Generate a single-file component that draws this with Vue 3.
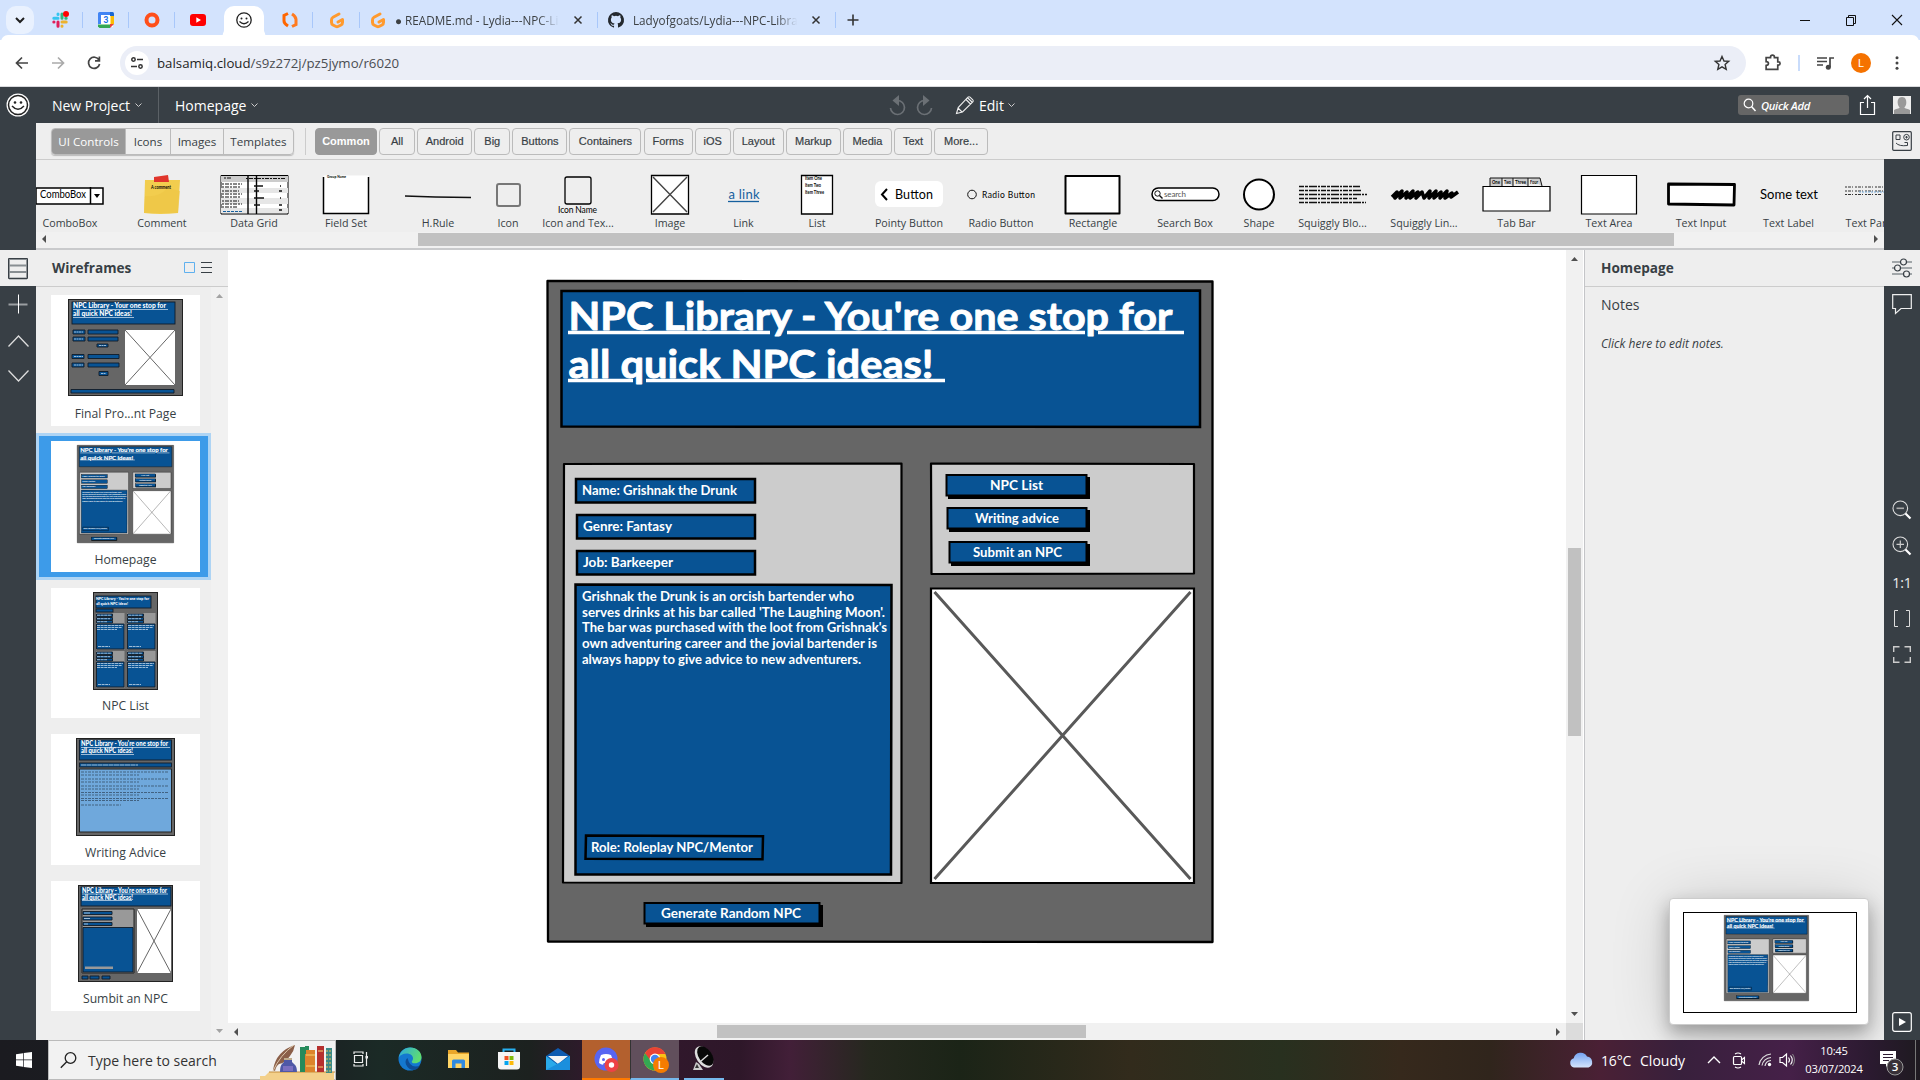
<script setup>
import { h } from 'vue'

const glyphs = {
  chevDown: '<path d="M4 6l4 4 4-4" fill="none" stroke="#1f1f1f" stroke-width="2"/>',
  slack: '<g stroke-width="3" stroke-linecap="round" fill="none"><path d="M6 6.2H1.8M6 2v.4" stroke="#36c5f0"/><path d="M10 2v4.2M13.8 6.2h.4" stroke="#2eb67d"/><path d="M10 10h4.2M10 14v.2" stroke="#ecb22e"/><path d="M6 14.2V10M2 10h-.2" stroke="#e01e5a"/></g><circle cx="14" cy="2" r="3" fill="#f00"/>',
  calendar: '<path d="M1 1h14v14H1z" fill="#fff"/><path d="M0 1.500Q0 0 1.500 0H12v3H3v9H0z" fill="#4285f4"/><path d="M12 0h2.500Q16 0 16 1.500V4h-4z" fill="#1967d2"/><path d="M12.500 4H16v8h-3.500z" fill="#fbbc04"/><path d="M3 12.500h9V16H1.500L0 14.500v-2z" fill="#34a853"/><path d="M12 16v-4h4z" fill="#ea4335"/><text x="8" y="11" font-size="8.500" font-weight="700" font-family="Roboto, sans-serif" fill="#1a73e8" text-anchor="middle">3</text>',
  ring: '<ellipse cx="8" cy="8" rx="5.500" ry="5.500" fill="none" stroke="#ff4f1a" stroke-width="4"/>',
  youtube: '<rect x="0" y="2" width="16" height="12" rx="3" fill="#f00"/><path d="M6.300 5.300v5.400L11 8z" fill="#fff"/>',
  smiley: '<circle cx="8" cy="8" r="7.200" fill="#fff" stroke="#222" stroke-width="1.300"/><circle cx="5.500" cy="6.500" r="1" fill="#222"/><circle cx="10.500" cy="6.500" r="1" fill="#222"/><path d="M3.500 9.500q4.500 4.500 9 0" fill="none" stroke="#222" stroke-width="1.200"/>',
  bolt: '<path d="M6 1.500L2 3.500V9q0 2.500 4 5" fill="none" stroke="#f60" stroke-width="3"/><path d="M10 14.500l4-2V7.500q0-3-4-5.500" fill="none" stroke="#ff7a1f" stroke-width="3"/>',
  gitpod: '<path d="M10 2L4 5.200Q2.500 6 2.500 8v2.500Q2.500 12 4 13l3 1.500q1 .5 2 0l3-1.500q1.500-1 1.500-2.500V7.500L9 10" fill="none" stroke="#ff9a2e" stroke-width="3" stroke-linecap="round" stroke-linejoin="round"/>',
  github: '<path fill="#24292f" d="M8 0a8 8 0 0 0-2.530 15.590c.4.070.55-.17.55-.38v-1.490c-2.230.48-2.700-.94-2.700-.94-.36-.92-.89-1.170-.89-1.170-.73-.5.05-.48.05-.48.8.05 1.230.82 1.230.82.71 1.220 1.870.87 2.330.66.070-.51.28-.87.5-1.070-1.780-.2-3.640-.88-3.640-3.950 0-.87.31-1.590.82-2.150-.08-.2-.36-1.020.08-2.120 0 0 .67-.21 2.200.82a7.600 7.600 0 0 1 4 0c1.530-1.040 2.200-.82 2.200-.82.44 1.100.16 1.920.08 2.120.51.56.82 1.270.82 2.150 0 3.070-1.870 3.750-3.650 3.950.29.25.54.73.54 1.480v2.190c0 .21.15.46.55.38A8 8 0 0 0 8 0z"/>',
  close: '<path d="M4.500 4.500l7 7m0-7l-7 7" stroke="#333" stroke-width="1.500"/>',
  plus: '<path d="M8 2.500v11M2.500 8h11" stroke="#333" stroke-width="1.600"/>',
  min: '<path d="M3 8.500h10" stroke="#111" stroke-width="1"/>',
  restore: '<path d="M3.500 5.500h7v8h-7zM5.500 5V3.500h7v8H11" fill="none" stroke="#111"/>',
  winClose: '<path d="M3 3l10 10M13 3L3 13" stroke="#111" stroke-width="1.100"/>',
  back: '<path d="M14 8H3m5-5.500L2.500 8 8 13.500" fill="none" stroke="#444" stroke-width="1.700"/>',
  fwd: '<path d="M2 8h11M8 2.500L13.500 8 8 13.500" fill="none" stroke="#aaa" stroke-width="1.700"/>',
  reload: '<path d="M13 5a5.600 5.600 0 1 0 .6 4M13.400 1.500v4.300H9" fill="none" stroke="#444" stroke-width="1.700"/>',
  tune: '<path d="M8 4.500h6M2 11.500h6" stroke="#333" stroke-width="1.600"/><circle cx="4.500" cy="4.500" r="1.700" fill="none" stroke="#333" stroke-width="1.500"/><circle cx="11.500" cy="11.500" r="1.700" fill="none" stroke="#333" stroke-width="1.500"/>',
  star: '<path d="M8 1.500l2 4.500 4.700.4-3.600 3.100 1.100 4.800L8 11.800l-4.200 2.500 1.100-4.800L1.300 6.400 6 6z" fill="none" stroke="#333" stroke-width="1.400"/>',
  puzzle: '<path d="M2 3.500h4.200V2.800a1.800 1.800 0 0 1 3.600 0v.7H13v4h.7a1.500 1.500 0 0 1 0 3H13v4H2v-3.700q2.200-.3 2.200-1.900T2 7.200z" fill="none" stroke="#444" stroke-width="1.600"/>',
  music: '<path d="M0 3h10M0 6.500h10M0 10h6M13 12V3h4" fill="none" stroke="#444" stroke-width="1.700"/><circle cx="11.300" cy="12.300" r="2.500" fill="#444"/>',
  dots: '<circle cx="8" cy="2.800" r="1.500" fill="#444"/><circle cx="8" cy="8" r="1.500" fill="#444"/><circle cx="8" cy="13.200" r="1.500" fill="#444"/>',
  logo: '<circle cx="12" cy="12" r="11.500" fill="#fff"/><circle cx="12" cy="12" r="9.500" fill="none" stroke="#222" stroke-width="1.500"/><circle cx="9" cy="9.500" r="1.300" fill="#222"/><circle cx="15" cy="9.500" r="1.300" fill="#222"/><path d="M6 13q6 6.500 12 0" fill="none" stroke="#222" stroke-width="1.500"/>',
  caret: '<path d="M1.500 2.500L4.500 5.500l3-3" fill="none" stroke="#ccc" stroke-width="1"/>',
  undo: '<path d="M8.500 5.500a7 7 0 1 1-7 7.500" fill="none" stroke="#6b7075" stroke-width="1.700"/><path d="M10 0v11L3.500 5.500z" fill="#6b7075"/>',
  redo: '<path d="M9.500 5.500a7 7 0 1 0 7 7.500" fill="none" stroke="#6b7075" stroke-width="1.700"/><path d="M8 0v11l6.500-5.500z" fill="#6b7075"/>',
  pencil: '<path d="M1.500 18.500l1.700-6L13 2.200q1-1 2 0l2.800 2.700q1 1 0 2L7.500 17zM11 4.500L15.500 9M12.800 3L17 7M3 13l4 4" fill="none" stroke="#eee" stroke-width="1.100"/>',
  search: '<circle cx="5.500" cy="5.500" r="4.300" fill="none" stroke="#fff" stroke-width="1.200"/><path d="M8.500 8.500L12.500 13" stroke="#fff" stroke-width="1.500"/>',
  share: '<path d="M5 8.500H1.500v12h14v-12H12M8.500 14V1.500M5 5l3.500-3.500L12 5" fill="none" stroke="#fff" stroke-width="1.200"/>',
  avatar: '<path d="M0 0h18v18H0z" fill="#ededed"/><path d="M9 1C5.500 1 4.500 4 4.700 7c.2 2 1 3.500 2 4.500-.5 1-4 1.500-5.700 2.500V18h16v-4c-1.700-1-5.200-1.500-5.700-2.500 1-1 1.800-2.500 2-4.500C13.500 4 12.500 1 9 1z" fill="#999"/>',
  inspector: '<rect x=".7" y=".7" width="18.600" height="18.600" rx="1" fill="none" stroke="#383f45" stroke-width="1.200"/><path d="M4 4h4v4.500H4zM4 12q3 3.500 11.500 2.500v-3h-3" fill="none" stroke="#383f45"/><circle cx="14.500" cy="6.200" r="2.800" fill="none" stroke="#383f45"/><path d="M14.500 5v2.500M13.300 6.200h2.500" stroke="#383f45"/>',
  left: '<path d="M6 0v8L2 4z" fill="#505050"/>',
  right: '<path d="M2 0v8l4-4z" fill="#505050"/>',
  up: '<path d="M0 6h7L3.500 2z" fill="#505050"/>',
  down: '<path d="M0 2h7L3.500 6z" fill="#505050"/>',
  upGray: '<path d="M0 6h7L3.500 2z" fill="#a3a3a3"/>',
  downGray: '<path d="M0 2h7L3.500 6z" fill="#a3a3a3"/>',
  rows: '<path d="M1 1v19M19 1v19" stroke="#383f45"/><path d="M1 1h18M1 7.500h18M1 14h18M1 20.500h18" stroke="#888e92" stroke-width="1.800"/><path d="M.5.500h19v20H.5z" fill="none" stroke="#383f45"/>',
  bigPlus: '<path d="M.5 10.500h19" stroke="#9b9fa2" stroke-width="2"/><path d="M10.500.500v19" stroke="#fff"/>',
  bigUp: '<path d="M.5 12.500l10-10.500 10 10.500" fill="none" stroke="#ddd" stroke-width="1.300"/>',
  bigDown: '<path d="M.5 1.500l10 10.500 10-10.500" fill="none" stroke="#ddd" stroke-width="1.300"/>',
  square: '<path d="M.5.500h10v10H.5z" fill="none" stroke="#5fb0ee"/>',
  lines: '<path d="M0 .5h11M0 5.500h11M0 10.500h11" stroke="#383f45"/>',
  sliders: '<path d="M0 4h20M0 10h20M0 16h20" stroke="#888e92" stroke-width="1.700"/><g fill="#eee" stroke="#383f45" stroke-width="1.200"><circle cx="11.500" cy="4" r="3"/><circle cx="5.500" cy="10" r="3"/><circle cx="14.500" cy="16" r="3"/></g>',
  comment: '<path d="M.7.700h18.600v13.800H9L3.500 19.500v-5H.7z" fill="none" stroke="#eee" stroke-width="1.200"/>',
  zoomOut: '<circle cx="8.300" cy="8.300" r="7.300" fill="none" stroke="#ddd" stroke-width="1.100"/><path d="M4.500 8.300h7.500" stroke="#aaa" stroke-width="1.600"/><path d="M13.500 13.500l5 5" stroke="#fff" stroke-width="2.200"/>',
  zoomIn: '<circle cx="8.300" cy="8.300" r="7.300" fill="none" stroke="#ddd" stroke-width="1.100"/><path d="M4.500 8.300h7.500M8.300 4.500v7.600" stroke="#ccc" stroke-width="1.200"/><path d="M13.500 13.500l5 5" stroke="#fff" stroke-width="2.200"/>',
  brackets: '<path d="M5 .5H1.500v16H5M13 .5h3.500v16H13" fill="none" stroke="#ddd"/>',
  expand: '<path d="M.7 6V.8H6.500M11.500.800h5.800V6M17.300 11v5.200h-5.800M6.500 16.200H.7V11" fill="none" stroke="#ccc" stroke-width="1.400"/>',
  play: '<rect x=".7" y=".7" width="18.600" height="18.600" rx="2" fill="none" stroke="#fff" stroke-width="1.200"/><path d="M7 6v8l7-4z" fill="#fff"/>',
  windows: '<path d="M0 2.200l7-1V7.600H0zM7.700 1.100L16 0v7.600H7.700zM0 8.300h7v6.500l-7-1zM7.700 8.300H16V16l-8.300-1.100z" fill="#fff"/>',
  find: '<circle cx="10.500" cy="6" r="5.300" fill="none" stroke="#222" stroke-width="1.300"/><path d="M6.700 9.800L.8 15.700" stroke="#222" stroke-width="1.400"/>',
  books: '<path d="M0 35h5l4-4h65v8H0z" fill="#f3d08a"/><path d="M9 31h66" stroke="#c58e3d"/><path d="M40 6h5v25h-5zM45 5h4v26h-4z" fill="#258a5b"/><path d="M45 13h10v18H45z" fill="#d9812f"/><path d="M46 9h9v22h-9z" fill="#dc842c"/><path d="M57 5h7v26h-7z" fill="#b6302e"/><path d="M66 7h6v25h-6z" fill="#3c8a86"/><path d="M46 14h9M46 25h9M58 10h5M58 26h5" stroke="#f5d36e"/><path d="M67 9v22M70 9v22" stroke="#e9bd5c" stroke-dasharray="2 2"/><path d="M13 29Q16 10 35 4q-1 6-5 11-5 7-11 8-3 2-4 7z" fill="#8b5f49"/><path d="M13 30Q20 14 34 4" stroke="#ddc7aa" fill="none"/><path d="M24 17h8v4l2 2q3 2 3 8H20q0-6 2-8l2-2z" fill="#4f58a6"/><path d="M24 17h8v2h-8z" fill="#c0ad8e"/><path d="M23 25h10v5H23z" fill="#7b6fc0"/>',
  taskview: '<path d="M1 3V1h9v2M1 13v2h9v-2M1.500 4.500h8v7h-8zM13.500 1v14" fill="none" stroke="#eee" stroke-width="1.200"/><path d="M12.500 5h2.500v2.500h-2.500z" fill="#eee"/>',
  edge: '<defs><linearGradient id="eg" x1="0" y1="0" x2="1" y2=".4"><stop offset="0" stop-color="#2ba9e0"/><stop offset="1" stop-color="#5edc72"/></linearGradient></defs><circle cx="12" cy="12" r="11.500" fill="#1478d0"/><path d="M.8 10.500C2 4.500 6.500.500 12.300.500 19 .500 23.500 5 23.500 10.300c0 3.700-3 6-6.500 6-2.700 0-3.500-1-3.200-1.800 1-1.500 1.200-2 1.200-3.200 0-2.500-2.500-4.700-6.300-4.700C5 6.600 2 8.300.8 10.500z" fill="url(#eg)"/><path d="M9.500 11q-3 2.500-1.500 6.500 2.500 5.500 8.500 5.500 3-.5 5.500-4.500-2 1-4.500 1-6 0-8-8.500z" fill="#0e4d96"/>',
  folder: '<path d="M1 3h8l2 2.500h11V21H1z" fill="#e9a62a"/><path d="M1 7h21v14H1z" fill="#ffd566"/><path d="M5 21v-7q0-1.500 1.500-1.500h10Q18 12.500 18 14v7h-3.500v-4.500h-6V21z" fill="#2f8ae0"/>',
  store: '<path d="M6.500 6V2.500h11V6" fill="none" stroke="#27b0f0" stroke-width="2"/><path d="M1 5h22v14.500q0 3-3 3H4q-3 0-3-3z" fill="#f5f5f5"/><path d="M7.500 9h4v4h-4z" fill="#f05323"/><path d="M12.500 9h4v4h-4z" fill="#80bb0a"/><path d="M7.500 14h4v4h-4z" fill="#04a5f0"/><path d="M12.500 14h4v4h-4z" fill="#fdba09"/>',
  mail: '<path d="M0 9L12 1l12 8v13H0z" fill="#0f5bb0"/><path d="M0 9l12 9 12-9v14H0z" fill="#2aa9ea"/><path d="M2 9h20L12 17z" fill="#f5f5f5"/><path d="M0 23L15 15l9-6v14z" fill="#1b8fdd"/>',
  discord: '<circle cx="12" cy="12" r="11.500" fill="#5865f2"/><path d="M7 8q5-2 10 0 2 4 2 8-2 1.500-4 1.700l-.8-1.700h-4.400L9 17.700Q7 17.500 5 16q0-4 2-8z" fill="#fff"/><circle cx="9.500" cy="12.500" r="1.500" fill="#5865f2"/><circle cx="17.500" cy="18" r="7" fill="#ed4245"/><circle cx="17.500" cy="18" r="2.700" fill="#fff"/>',
  chrome: '<circle cx="12" cy="12" r="11.500" fill="#fbc116"/><path d="M2 6.300A11.500 11.500 0 0 1 22.500 7H12l-5 8z" fill="#ea4335"/><path d="M2 6.300A11.500 11.500 0 0 0 11 23.500l5-8.500-8-1z" fill="#34a853"/><circle cx="12" cy="12" r="5.400" fill="#fff"/><circle cx="12" cy="12" r="4.200" fill="#4285f4"/><circle cx="18" cy="18" r="8" fill="#f57c00"/><text x="18" y="22" text-anchor="middle" font-size="11" font-family="Roboto, sans-serif" fill="#fff">L</text>',
  dish: '<path d="M4 15l-3 8h10l-4-6z" fill="#ccc"/><path d="M5 17l-2 4h4z" fill="#333"/><g transform="rotate(-35 12 10)"><ellipse cx="12" cy="10" rx="7.500" ry="12" fill="#ddd"/><ellipse cx="13.700" cy="10" rx="6.500" ry="11" fill="#080808"/></g><path d="M9 14l7-6" stroke="#ddd" stroke-width="1.500"/>',
  cloud: '<defs><linearGradient id="cg" x1="0" y1="0" x2="0" y2="1"><stop offset="0" stop-color="#74a3f2"/><stop offset="1" stop-color="#d5e4fb"/></linearGradient></defs><path d="M5 16.500a4.800 4.800 0 0 1-.3-9.300A7.200 7.200 0 0 1 18 5.500a5.700 5.700 0 0 1 1.500 11z" fill="url(#cg)"/>',
  trayUp: '<path d="M1 8l6-6 6 6" fill="none" stroke="#fff" stroke-width="1.400"/>',
  meet: '<rect x="1.500" y="4.500" width="8" height="8" rx="1" fill="none" stroke="#fff" stroke-width="1.200"/><path d="M9.500 8l3-2.500v6L9.500 9M3 2q3-2 6 0M3 15q3 2 6 0" fill="none" stroke="#fff" stroke-width="1.100"/>',
  wifi: '<path d="M1 13A13 13 0 0 1 13 2M4 13.500a9.500 9.500 0 0 1 9-8M7 14a6.500 6.500 0 0 1 6-5.500" fill="none" stroke="#ddd" stroke-width="1.200"/><circle cx="11.500" cy="12.500" r="1.700" fill="#fff"/>',
  volume: '<path d="M1 5.500h2.500l4-3.500v12l-4-3.500H1z" fill="none" stroke="#fff" stroke-width="1.200"/><path d="M9.500 5.500q2 2.500 0 5M11.500 3.500q3.500 4.500 0 9" fill="none" stroke="#fff" stroke-width="1.100"/><path d="M13.500 2q4 6 0 12" fill="none" stroke="#888"/>',
  notif: '<path d="M0 0h16v13H9l-3 3v-3H0z" fill="#fff"/><path d="M3 3.500h10M3 6.500h10M3 9.500h6" stroke="#2b1a30" stroke-width="1.200"/><circle cx="15" cy="16" r="8" fill="#383038" stroke="#999"/><text x="15" y="20" text-anchor="middle" font-size="11.500" font-weight="600" font-family="Open Sans, sans-serif" fill="#fff">3</text>'
}

// Inline icon: <Ico n="star" :w="18" b="0 0 16 16" />
const Ico = (p) =>
  h('svg', {
    width: p.w || 16,
    height: p.t || p.w || 16,
    viewBox: p.b || `0 0 ${p.w || 16} ${p.t || p.w || 16}`,
    innerHTML: glyphs[p.n]
  })

const hand = 'font-family="Lato, sans-serif"'
const squig = (y, w) => `<path d="M-34 ${y}H${-34 + w}" stroke="#111" stroke-width="1.400" stroke-dasharray="5 1 3 1 8 1 2 1"/>`
const small = (x, y, s, l, sz = 5) => `<text x="${x}" y="${y}" font-size="${sz}" font-weight="700" ${hand} textLength="${l}" lengthAdjust="spacingAndGlyphs">${s}</text>`
const controls = [
  ['ComboBox', 92, `<path d="M-34 22H33V38H-34z" fill="#fff" stroke="#000" stroke-width="1.500"/><path d="M20.500 21V38" stroke="#000" stroke-width="1.500"/><path d="M24 28h6l-3 4z"/><text x="-30" y="32" font-size="10.500" ${hand} textLength="46" lengthAdjust="spacingAndGlyphs">ComboBox</text>`],
  ['Comment', 92, `<path d="M-17 14H18l-2 33q-18 2-34 0z" fill="#f2cd4e"/><path d="M-17 30q14 2 22-8l13 3-2 22h-34z" fill="#edc545" opacity=".6"/><path d="M-8 11l14-2 1 7H-8z" fill="#e0352b"/>${small(-11, 23, 'A comment', 20)}`],
  ['Data Grid', 92, `<path d="M-33 9.500H34V48H-33z" fill="#fff" stroke="#000"/><path d="M-33 10h67v6h-67z" fill="#ccc"/><path d="M-33 22h67v5h-67zM-33 32h67v6h-67zM-33 42h67v5h-67z" fill="#e6e6e6"/><path d="M-6 9V48M2.500 9V48" stroke="#000" stroke-width="1.400"/><path d="M-32 18h20M-32 21h19M-32 25h17M-32 28h20M-32 31h19M-32 35h17M-32 38h20M-32 41h16M-30 12h8M-8 12.500h40" stroke="#111" stroke-width="1.100" stroke-dasharray="2 1 4 1"/><path d="M-31 45.500h19" stroke="#16609e" stroke-dasharray="3 1"/><path d="M0 20h9M0 25h5M0 32h10M0 39h6M26 20h1M25 25h3M26 32h1M25 39h3M25 44h3" stroke="#111" stroke-width="1.500"/>`],
  ['Field Set', 92, `<path d="M-22.500 9.500h45V48h-45z" fill="#fff"/><path d="M-22.500 11V47.500h45V11" fill="none" stroke="#000" stroke-width="1.500"/>${small(-19, 12, 'Group Name', 19, 4)}`],
  ['H.Rule', 92, '<path d="M-33 30l30 1 36 .5" stroke="#111" stroke-width="1.600" fill="none"/>'],
  ['Icon', 48, '<rect x="-11" y="18" width="23" height="22" rx="2" fill="none" stroke="#777" stroke-width="2"/>'],
  ['Icon and Tex...', 92, `<rect x="-13" y="11" width="26" height="27" rx="2" fill="none" stroke="#000" stroke-width="1.300"/><text x="-20" y="47" font-size="8.500" ${hand} textLength="39">Icon Name</text>`],
  ['Image', 92, '<path d="M-18.500 9.500h37V48h-37z" fill="#fff" stroke="#000" stroke-width="1.300"/><path d="M-17 11l34 35M17 11l-34 35" stroke="#444" stroke-width="1.400"/>'],
  ['Link', 55, `<text x="-15.500" y="33" font-size="13" ${hand} fill="#16609e" textLength="31">a link</text><path d="M-16 35.500h31" stroke="#16609e" stroke-width="1.300"/>`],
  ['List', 92, `<path d="M-15.500 9.500h31V48h-31z" fill="#fff" stroke="#000" stroke-width="1.300"/>${small(-12, 14, 'Item One', 17)}${small(-12, 21, 'Item Two', 16)}${small(-12, 27.500, 'Item Three', 19)}`],
  ['Pointy Button', 92, `<rect x="-34" y="15" width="68" height="26" rx="6" fill="#fff"/><path d="M-22 23l-5 5.500 5 5.500" fill="none" stroke="#000" stroke-width="2"/><text x="-14" y="32.500" font-size="12.500" ${hand} textLength="38">Button</text>`],
  ['Radio Button', 92, `<circle cx="-29" cy="28.500" r="4.300" fill="none" stroke="#111"/><text x="-19" y="31.500" font-size="8.500" ${hand} textLength="53">Radio Button</text>`],
  ['Rectangle', 92, '<path d="M-27.500 10h54v37.500h-54z" fill="#fff" stroke="#000" stroke-width="2" stroke-linejoin="round"/>'],
  ['Search Box', 92, `<rect x="-33" y="22" width="67" height="12.500" rx="6.200" fill="#fff" stroke="#000" stroke-width="1.500"/><circle cx="-27.500" cy="27.500" r="2.700" fill="none" stroke="#111"/><path d="M-25.500 29.500l3 3" stroke="#111" stroke-width="1.400"/><text x="-21" y="31" font-size="8" ${hand} fill="#555" textLength="22">search</text>`],
  ['Shape', 56, '<circle cx="0" cy="28.500" r="15" fill="#fff" stroke="#000" stroke-width="2"/>'],
  ['Squiggly Blo...', 91, squig(20.500, 61) + squig(24.500, 63) + squig(28.500, 68) + squig(32.500, 58) + squig(36.500, 67)],
  ['Squiggly Lin...', 92, '<path d="M-32 31l5-5-2 6 7-7-2 7 7-6-1 6 7-7-3 7 8-6-2 6 6-6 2 6 6-7-1 7 7-7-2 7 7-6-1 6 7-7-2 7 7-5-1 4 7-5" fill="none" stroke="#000" stroke-width="3.500" stroke-linejoin="round"/>'],
  ['Tab Bar', 93, `<path d="M-27 20v-8h12v8M-15 12h11v8M-4 12h15v8M11 12h12l2 8" fill="#ccc" stroke="#111"/><path d="M-34 20.500h67V45h-67z" fill="#fff" stroke="#000" stroke-width="1.200"/>${small(-25, 18, 'One', 8)}${small(-13, 18, 'Two', 7)}${small(-2, 18, 'Three', 11)}${small(13, 18, 'Four', 8)}`],
  ['Text Area', 92, '<path d="M-27.500 9.500h55V48h-55z" fill="#fff" stroke="#000" stroke-width="1.200"/>'],
  ['Text Input', 92, '<path d="M-32.500 18l66 .5-.5 20.500-65.500-1z" fill="#fff" stroke="#000" stroke-width="2.800" stroke-linejoin="round"/>'],
  ['Text Label', 83, `<text x="-29" y="33" font-size="13" ${hand} textLength="58">Some text</text>`],
  ['Text Parag...', 92, '<path d="M-31 21h64M-31 25h64M-31 28.500h36" stroke="#333" stroke-width="1.200" stroke-dasharray="2 1 3 1 1 2"/><path d="M-17 26h35" stroke="#79aede" stroke-dasharray="2 1"/>']
]

const kinds = [['UI Controls', 74], ['Icons', 45], ['Images', 53], ['Templates', 69]]
const categories = [
  ['Common', 62], ['All', 36], ['Android', 55], ['Big', 36], ['Buttons', 55], ['Containers', 72],
  ['Forms', 49], ['iOS', 36], ['Layout', 51], ['Markup', 55], ['Media', 49], ['Text', 38], ['More...', 54]
]

const lines = [
  ['Grishnak the Drunk is an orcish bartender who', 601, 272],
  ["serves drinks at his bar called 'The Laughing Moon'.", 616.6, 303],
  ["The bar was purchased with the loot from Grishnak's", 632, 305],
  ['own adventuring career and the jovial bartender is', 648, 295],
  ['always happy to give advice to new adventurers.', 664, 279]
]
const fields = [
  ['Name: Grishnak the Drunk', 575, 478, 582, 155],
  ['Genre: Fantasy', 576, 514, 583, 89],
  ['Job: Barkeeper', 576, 550, 583, 90]
]
const buttons = [
  ['NPC List', 945, 474, 142, 990, 53],
  ['Writing advice', 946, 507, 141, 975, 84],
  ['Submit an NPC', 948, 541, 139, 973, 89],
  ['Generate Random NPC', 643, 902, 177, 661, 140]
]
const title = ["NPC Library - You're one stop for", 'all quick NPC ideas!']
const advice = [3, 6, 10, 13, 17, 20, 23.500, 26, 29.500, 31.500, 36]
const listCells = [[3, 21], [34, 21], [3, 59], [34, 59]]
const pages = [
  { name: 'Final Pro...nt Page', art: 'front', w: 115, t: 97 },
  { name: 'Homepage', art: 'home', w: 97, t: 98, on: true },
  { name: 'NPC List', art: 'list', w: 65, t: 98 },
  { name: 'Writing Advice', art: 'advice', w: 99, t: 98 },
  { name: 'Sumbit an NPC', art: 'submit', w: 95, t: 97 }
]
const apps = [['taskview', '', 16], ['edge'], ['folder'], ['store'], ['mail'], ['discord', 'discord'], ['chrome', 'chrome'], ['dish', 'dish']]
</script>

<template>
  <div class="screen">
    <div class="tabs">
      <div class="tab-menu"><Ico n="chevDown" /></div>
      <div class="pin bar"><Ico n="slack" b="-1 -1 18 18" :w="18" /></div>
      <div class="pin bar"><Ico n="calendar" /></div>
      <div class="pin bar"><Ico n="ring" /></div>
      <div class="pin"><Ico n="youtube" /></div>
      <div class="pin active"><Ico n="smiley" /></div>
      <div class="pin bar"><Ico n="bolt" b="0 0 16 16" /></div>
      <div class="pin bar wide"><Ico n="gitpod" /></div>
      <div class="tab bar"><Ico n="gitpod" /><span class="tab-text">● README.md - Lydia---NPC-Lib</span><Ico n="close" /></div>
      <div class="tab bar"><Ico n="github" /><span class="tab-text">Ladyofgoats/Lydia---NPC-Librar</span><Ico n="close" /></div>
      <Ico n="plus" class="new-tab" />
      <div class="win"><Ico n="min" /><Ico n="restore" /><Ico n="winClose" /></div>
    </div>

    <div class="toolbar">
      <Ico n="back" /><Ico n="fwd" /><Ico n="reload" />
      <div class="omni">
        <div class="site"><Ico n="tune" /></div>
        <span class="url"><b>balsamiq.cloud</b>/s9z272j/pz5jymo/r6020</span>
        <Ico n="star" />
      </div>
      <Ico n="puzzle" :w="18" b="0 0 17 17" class="ext" />
      <i class="tool-sep"></i>
      <Ico n="music" class="music" />
      <div class="profile">L</div>
      <Ico n="dots" />
    </div>

    <div class="header">
      <div class="hd-logo"><Ico n="logo" :w="24" /></div>
      <div class="hd-project">New Project <Ico n="caret" :w="9" /></div>
      <div class="hd-page">Homepage <Ico n="caret" :w="9" /></div>
      <div class="hd-edit">
        <Ico n="undo" :w="18" :t="20" /><Ico n="redo" :w="18" :t="20" />
        <Ico n="pencil" :w="19" :t="20" class="pencil" /><span>Edit</span><Ico n="caret" :w="9" />
      </div>
      <div class="quick"><Ico n="search" :w="14" />Quick Add</div>
      <Ico n="share" :w="17" :t="22" class="share" />
      <Ico n="avatar" :w="18" />
    </div>

    <div class="upper">
      <div class="rail-fill"></div>
      <div class="ribbon">
        <div class="cats">
          <div class="kinds"><span v-for="(k, i) in kinds" :key="k[0]" :class="{ sel: !i }" :style="{ width: k[1] + 'px' }">{{ k[0] }}</span></div>
          <i class="cat-sep"></i>
          <div class="chips"><span v-for="(c, i) in categories" :key="c[0]" :class="{ sel: !i }" :style="{ width: c[1] + 'px' }">{{ c[0] }}</span></div>
        </div>
        <div class="controls">
          <div v-for="c in controls" :key="c[0]" class="control" :style="{ width: c[1] + 'px' }">
            <svg width="92" height="50" viewBox="-46 0 92 50" v-html="c[2]"></svg>
            <span>{{ c[0] }}</span>
          </div>
        </div>
        <div class="hscroll top"><Ico n="left" :w="8" /><i class="thumb"></i><Ico n="right" :w="8" /></div>
      </div>
      <div class="rail-right-top"><div class="insp"><Ico n="inspector" :w="20" /></div></div>
    </div>

    <div class="main">
      <div class="rail">
        <div class="rail-head"><Ico n="rows" :w="20" :t="21" /></div>
        <Ico n="bigPlus" :w="20" /><Ico n="bigUp" :w="21" :t="14" /><Ico n="bigDown" :w="21" :t="14" />
      </div>

      <div class="side">
        <div class="side-head"><span>Wireframes</span><Ico n="square" :w="11" /><Ico n="lines" :w="11" /></div>
        <div class="side-body">
          <div class="pages">
            <div v-for="p in pages" :key="p.name" class="slot" :class="{ on: p.on }">
              <div class="card">
                <div class="art">
                  <svg v-if="p.art === 'home'" :width="p.w" :height="p.t" viewBox="546 279 669 664" preserveAspectRatio="none"><use href="#home-frame" /></svg>
                  <svg v-else :width="p.w" :height="p.t" :viewBox="`0 0 ${p.w} ${p.t}`" class="mini">
                    <rect class="g" x=".5" y=".5" :width="p.w - 1" :height="p.t - 1" />
                    <template v-if="p.art === 'front'">
                      <rect class="b" x="4" y="3" width="103" height="22" />
                      <text x="5" y="9" textLength="93" lengthAdjust="spacingAndGlyphs">NPC Library - Your one stop for</text>
                      <text x="5" y="17" textLength="59" lengthAdjust="spacingAndGlyphs">all quick NPC ideas!</text>
                      <path class="u" d="M5 10.500h95M5 18.500h61" />
                      <path class="b" d="M5 31h12v4H5zM20 31h30v4H20zM5 38h12v4H5zM20 38h30v4H20zM29 45h11v3H29zM4 55.500h12v4H4zM20 55.500h31v4H20zM4 64h12v4H4zM20 64h31v4H20zM31 72.500h9v4h-9z" />
                      <path class="u" d="M6 33h9M6 40h9M31 46.500h7M6 57.500h9M6 66h9M33 74.500h5" stroke-dasharray="2 .5" />
                      <path class="w" d="M57 31h50v55H57z" /><path class="x" d="M57 31l50 55M107 31L57 86" />
                      <path class="b" d="M3 90.500h103v3.500H3z" />
                    </template>
                    <template v-if="p.art === 'list'">
                      <rect class="b" x="3" y="4" width="55" height="12" />
                      <text class="s" x="3" y="8" textLength="53" lengthAdjust="spacingAndGlyphs">NPC Library - You're one stop for</text>
                      <text class="s" x="3" y="12.500" textLength="32" lengthAdjust="spacingAndGlyphs">all quick NPC ideas!</text>
                      <rect class="b" x="3" y="17" width="17" height="3" />
                      <g v-for="c in listCells" :key="c.join()" :transform="`translate(${c[0]} ${c[1]})`">
                        <path d="M0 0h28.500v36.500H0z" fill="#999" />
                        <path class="b" d="M.5 1h16v2.500H.5zM.5 4.500h16v2.500H.5zM.5 7.500h16V10H.5zM.5 11h27.500v25H.5z" />
                        <path class="u" d="M1 2.200h14M1 5.700h13M1 8.700h10M1 12.500h26M1 14.500h25M1 16.500h20M2 33.500h12" stroke-dasharray="3 .6" />
                      </g>
                    </template>
                    <template v-if="p.art === 'advice'">
                      <rect class="b" x="3.500" y="2" width="92" height="20" />
                      <text x="5" y="8" textLength="87" lengthAdjust="spacingAndGlyphs">NPC Library - You're one stop for</text>
                      <text x="5" y="15" textLength="52" lengthAdjust="spacingAndGlyphs">all quick NPC ideas!</text>
                      <path class="u" d="M5 9.500h89M5 16.500h53" />
                      <rect class="b" x="3.500" y="25" width="92" height="4" /><path class="u" d="M5 27h57" stroke-width="2" stroke-dasharray="5 .5" />
                      <rect x="3.500" y="31" width="92" height="63" fill="#6fa8dc" stroke="#222" />
                      <path v-for="(y, i) in advice" :key="y" :d="`M5 ${y + 31}h${i === 10 ? 40 : 88 - (i % 2) * 30}`" stroke="#234" stroke-dasharray="3 1 2 1" stroke-width=".6" />
                    </template>
                    <template v-if="p.art === 'submit'">
                      <rect class="b" x="3" y="2" width="90" height="19" />
                      <text x="4" y="8" textLength="85" lengthAdjust="spacingAndGlyphs">NPC Library - You're one stop for</text>
                      <text x="4" y="14.500" textLength="51" lengthAdjust="spacingAndGlyphs">all quick NPC ideas!</text>
                      <path class="u" d="M4 9h86M4 15.500h50" />
                      <path d="M4 24h52v64H4z" fill="#999" stroke="#222" />
                      <path class="b" d="M5 26.500h29v3H5zM5 32h29v3H5zM5 37.500h29v3H5zM5 42.500h50V87H5z" />
                      <path class="u" d="M6 28h6M6 33.500h6M6 39h4" /><path d="M7 81.500h28v2.500H7z" fill="#999" />
                      <path class="w" d="M59 24h34v64H59z" /><path class="x" d="M59 24l34 64M93 24L59 88" />
                      <path class="b" d="M4 91h6v3H4zM12 91h9v3h-9zM24 91h8v3h-8z" />
                    </template>
                  </svg>
                </div>
                <span>{{ p.name }}</span>
              </div>
            </div>
          </div>
          <div class="vscroll"><Ico n="upGray" :w="7" :t="8" /><Ico n="downGray" :w="7" :t="8" /></div>
        </div>
      </div>

      <div class="stage">
        <div class="stage-row">
          <svg class="canvas" width="1338" height="773" viewBox="228 250 1338 773">
            <defs>
              <g id="home-frame" font-family="Lato, sans-serif" font-weight="700" fill="#fff">
                <path d="M547.500 281l665 .5v660.500l-664.500-.5z" fill="#666" stroke="#000" stroke-width="2.300" stroke-linejoin="round" />
                <path d="M561.500 291l638.500-.5v136.500l-638.500-.5z" fill="#085394" stroke="#000" stroke-width="2.500" />
                <g font-size="39" stroke="#fff" stroke-width=".9" stroke-linejoin="round">
                  <text x="568.500" y="329.500" textLength="604" lengthAdjust="spacingAndGlyphs">{{ title[0] }}</text>
                  <text x="568.500" y="377.500" textLength="365" lengthAdjust="spacingAndGlyphs">{{ title[1] }}</text>
                </g>
                <path d="M568 332.500h202m17 0h298m13 0h86M568 380.500h65m13 0h299" stroke="#fff" stroke-width="3.500" />
                <path d="M564 464l337.500-.5v419.500L563 882.500z" fill="#ccc" stroke="#000" stroke-width="2.200" stroke-linejoin="round" />
                <g v-for="f in fields" :key="f[0]" font-size="12.500">
                  <rect :x="f[1] + 1" :y="f[2] + 1" :width="754 - f[1]" height="23.500" fill="#085394" stroke="#000" stroke-width="2.500" />
                  <text :x="f[3]" :y="f[2] + 16.500" :textLength="f[4]" lengthAdjust="spacingAndGlyphs">{{ f[0] }}</text>
                </g>
                <path d="M575.500 584.500l316 .5-.5 289.500H575.500z" fill="#085394" stroke="#000" stroke-width="2.500" />
                <text v-for="l in lines" :key="l[1]" x="582" :y="l[1]" font-size="12.500" :textLength="l[2]" lengthAdjust="spacingAndGlyphs">{{ l[0] }}</text>
                <path d="M586 835.500l177 .8-.5 23-177-.5z" fill="none" stroke="#000" stroke-width="2.500" />
                <text x="591" y="851.500" font-size="12.500" textLength="162" lengthAdjust="spacingAndGlyphs">Role: Roleplay NPC/Mentor</text>
                <path d="M931 463.500l263 .5v109.500l-262.500.5z" fill="#ccc" stroke="#000" stroke-width="2.200" stroke-linejoin="round" />
                <g v-for="b in buttons" :key="b[0]" font-size="12.500">
                  <rect :x="b[1] + 3" :y="b[2] + 3" :width="b[3]" height="22" fill="#000" />
                  <rect :x="b[1] + 1.500" :y="b[2] + 1" :width="b[3] - 2" height="20.500" fill="#085394" stroke="#000" stroke-width="2" />
                  <text :x="b[4]" :y="b[2] + 16" :textLength="b[5]" lengthAdjust="spacingAndGlyphs">{{ b[0] }}</text>
                </g>
                <path d="M931 588.500h263v294.500h-263z" fill="#fff" stroke="#000" stroke-width="2.200" />
                <path d="M934.500 592l256 287M1190.500 592l-256 287" stroke="#595959" stroke-width="3" />
              </g>
            </defs>
            <use href="#home-frame" />
          </svg>
          <div class="vscroll dark"><Ico n="up" :w="7" :t="8" /><i class="thumb"></i><Ico n="down" :w="7" :t="8" /></div>
        </div>
        <div class="stage-foot">
          <div class="hscroll bottom"><Ico n="left" :w="8" /><i class="thumb"></i><Ico n="right" :w="8" /></div>
          <i class="corner"></i>
        </div>
      </div>

      <div class="notes">
        <div class="notes-head">Homepage</div>
        <div class="notes-title">Notes</div>
        <div class="notes-text">Click here to edit notes.</div>
        <div class="map">
          <div class="map-frame"><svg width="85" height="86" viewBox="546 279 669 664" preserveAspectRatio="none"><use href="#home-frame" /></svg></div>
        </div>
      </div>

      <div class="rail right">
        <div class="rail-head"><Ico n="sliders" :w="20" /></div>
        <Ico n="comment" :w="20" />
        <div class="zoomers">
          <div><Ico n="zoomOut" :w="20" /></div>
          <div><Ico n="zoomIn" :w="20" /></div>
          <div>1:1</div>
          <div><Ico n="brackets" :w="18" :t="17" /></div>
          <div><Ico n="expand" :w="18" :t="17" /></div>
        </div>
        <Ico n="play" :w="20" class="play" />
      </div>
    </div>

    <div class="taskbar">
      <div class="start"><Ico n="windows" /></div>
      <div class="find"><Ico n="find" :w="17" /><span>Type here to search</span><Ico n="books" :w="75" :t="38" /></div>
      <div v-for="a in apps" :key="a[0]" class="app" :class="a[1]"><Ico :n="a[0]" :w="a[2] || 24" :t="a[2] || 24" /></div>
      <div class="tray">
        <Ico n="cloud" :w="25" :t="18" />
        <span class="temp">16°C</span><span class="sky">Cloudy</span>
        <Ico n="trayUp" :w="14" :t="10" />
        <Ico n="meet" :w="14" :t="17" class="meet" />
        <Ico n="wifi" :w="14" :t="16" class="wifi" />
        <Ico n="volume" :w="17" :t="16" class="vol" />
        <div class="clock"><span>10:45</span><span>03/07/2024</span></div>
        <Ico n="notif" :w="24" :t="25" class="notif" />
        <i class="peek"></i>
      </div>
    </div>
  </div>
</template>

<style>
body { overflow: hidden; }
</style>

<style scoped>
* { box-sizing: border-box; }
svg { display: block; flex: none; overflow: visible; }
.screen { width: 1920px; height: 1080px; display: flex; flex-direction: column; font-family: "Open Sans", sans-serif; color: #383f45; white-space: nowrap; overflow: hidden; }

.tabs { height: 40px; background: #d3e3fd; display: flex; align-items: center; padding-left: 6px; flex: none; }
.tab-menu { width: 28px; height: 28px; border-radius: 10px; background: #e9f1fe; display: flex; align-items: center; justify-content: center; margin-right: 3px; }
.pin { width: 46px; height: 40px; display: flex; align-items: center; justify-content: center; position: relative; }
.pin.wide { width: 47px; }
.bar::after { content: ""; position: absolute; right: 0; top: 12px; width: 1.500px; height: 16px; background: #a8c7fa; }
.pin.active::before { content: ""; position: absolute; left: 3px; right: 3px; top: 6px; bottom: 0; background: #fff; border-radius: 10px 10px 0 0; }
.pin.active::after { content: ""; position: absolute; left: -7px; right: -7px; bottom: 0; height: 10px; background: radial-gradient(circle at 0 0, transparent 9.500px, #fff 10px) left / 10px 10px no-repeat, radial-gradient(circle at 100% 0, transparent 9.500px, #fff 10px) right / 10px 10px no-repeat; }
.pin.active svg { position: relative; z-index: 1; }
.tab { width: 238px; height: 40px; padding: 0 10px 0 10px; display: flex; align-items: center; position: relative; font-size: 11.700px; color: #3c4043; }
.tab-text { width: 166px; margin: 0 9px 0 9px; overflow: hidden; -webkit-mask-image: linear-gradient(90deg, #000 86%, transparent 99%); mask-image: linear-gradient(90deg, #000 86%, transparent 99%); }
.new-tab { margin-left: 9px; }
.win { display: flex; gap: 30px; margin-left: auto; margin-right: 15px; }

.toolbar { height: 47px; background: #fff; border-bottom: 1px solid #d9dadd; display: flex; align-items: center; padding-left: 14px; gap: 20px; flex: none; box-shadow: 0 -6px 0 -1px #fff; border-radius: 8px 8px 0 0; }
.omni { width: 1626px; height: 34px; margin-left: -2px; background: #ebeef7; border-radius: 17px; display: flex; align-items: center; padding: 0 16px 0 5px; }
.site { width: 24px; height: 24px; border-radius: 50%; background: #fff; display: flex; align-items: center; justify-content: center; }
.url { margin-left: 8px; font-size: 13.250px; flex: 1; color: #4a4d52; }
.url b { font-weight: 400; color: #1f1f1f; }
.ext { margin-left: -2px; }
.tool-sep { width: 2px; height: 16px; background: #c9dcfb; margin: 0 -4px 0 -4px; }
.music { margin: 0 -1px 0 1px; }
.profile { width: 20px; height: 20px; border-radius: 50%; background: #f57200; color: #fff; font: 11px Roboto, sans-serif; display: flex; align-items: center; justify-content: center; margin: 0 0 0 -1px; }
.profile + svg { margin-left: -2px; }

.header { height: 36px; background: #383f45; display: flex; align-items: center; color: #fff; font-size: 14px; flex: none; }
.hd-logo { width: 36px; display: flex; padding-left: 6px; }
.hd-project { width: 123px; height: 36px; padding-left: 16px; border-right: 1px solid #5b6166; display: flex; align-items: center; gap: 4px; letter-spacing: -.05px; }
.hd-page { padding-left: 16px; width: 730px; display: flex; align-items: center; gap: 4px; }
.hd-edit { display: flex; align-items: center; width: 849px; gap: 8px; }
.hd-edit span { margin: 0 -5px 0 -3px; }
.pencil { margin-left: 14px; }
.quick { width: 111px; height: 20px; background: #666; border-radius: 3px; display: flex; align-items: center; gap: 4px; padding-left: 5px; font: italic 600 11.200px "Open Sans", sans-serif; letter-spacing: -.3px; }
.share { margin: 0 16px 0 10px; }
.share + svg { margin-left: 1px; }

.upper { height: 127px; display: flex; flex: none; background: #eee; }
.rail-fill { width: 36px; background: #383f45; }
.ribbon { width: 1848px; overflow: hidden; border-bottom: 2px solid #c9cacc; }
.cats { height: 37px; border-bottom: 1px solid #ccc; display: flex; padding: 5px 0 0 15px; }
.kinds { display: flex; height: 27px; border: 1px solid #bbb; border-radius: 4px; box-shadow: 0 1px 1px #bbb; overflow: hidden; }
.kinds span { text-align: center; font-size: 11.600px; line-height: 25px; border-right: 1px solid #bbb; }
.kinds span:last-child { border: 0; }
.kinds .sel, .chips .sel { background: #999; color: #fff; }
.cat-sep { width: 1px; height: 27px; background: #ccc; margin: 0 9px 0 11px; }
.chips { display: flex; gap: 2.100px; font: 500 11px "Liberation Sans", sans-serif; }
.chips span { height: 27px; border: 1px solid #bbb; border-radius: 4px; text-align: center; line-height: 25px; -webkit-text-stroke: .2px; flex: none; }
.chips .sel { font-weight: 700; -webkit-text-stroke: 0; border-color: #999; }
.controls { height: 72px; display: flex; margin-left: -12px; padding-top: 6px; }
.control { flex: none; display: flex; flex-direction: column; align-items: center; font-size: 10.700px; line-height: 14px; }
.hscroll { height: 16px; background: #f1f1f1; display: flex; align-items: center; padding: 0 4px; }
.hscroll .thumb { height: 13px; background: #c1c1c1; }
.top { padding-bottom: 2px; }
.top .thumb { width: 1256px; margin: 0 198px 0 370px; }
.rail-right-top { width: 36px; background: #383f45; }
.insp { height: 36px; background: #eee; display: flex; align-items: center; justify-content: center; }

.main { height: 790px; display: flex; flex: none; }
.rail { width: 36px; background: #383f45; display: flex; flex-direction: column; align-items: center; flex: none; }
.rail-head { width: 36px; height: 36px; background: #eee; display: flex; align-items: center; justify-content: center; margin-bottom: 8px; }
.rail > svg + svg { margin-top: 20px; }
.rail > svg:last-child { margin-top: 21px; }
.side { width: 192px; background: #eee; }
.side-head { height: 37px; border-bottom: 1px solid #ccc; display: flex; align-items: center; padding: 0 16px 1px; font-size: 13.600px; font-weight: 700; gap: 6px; }
.side-head span { flex: 1; }
.side-body { display: flex; height: 753px; }
.pages { width: 175px; }
.slot { height: 146.400px; padding: 8px 0 0 15px; }
.slot.on { height: 147px; margin-bottom: -.6px; background: #3d9be9; border: 3px solid #aed4f4; padding: 5px 0 0 12px; }
.card { width: 149px; height: 130.600px; background: #fff; display: flex; flex-direction: column; align-items: center; font-size: 12.200px; line-height: 18px; padding-top: 4px; }
.art { height: 105.500px; }
.mini text { font: 900 6.800px Lato, sans-serif; fill: #fff; }
.mini .s { font-size: 4.200px; }
.mini .g { fill: #666; stroke: #222; }
.mini .b { fill: #085394; stroke: #111c28; stroke-width: .9; }
.mini .w { fill: #fff; }
.mini .x { stroke: #666; stroke-width: 1; fill: none; }
.mini .u { stroke: #dce8f3; stroke-width: .7; fill: none; }
.vscroll { width: 17px; background: #f1f1f1; display: flex; flex-direction: column; align-items: center; justify-content: space-between; padding: 5px 0; }
.stage { width: 1357px; background: #fff; border-right: 1px solid #c4c5c8; flex: none; }
.stage-row { display: flex; height: 773px; }
.vscroll.dark { padding: 5px 0 4px; justify-content: flex-start; }
.vscroll.dark .thumb { width: 13px; height: 188px; background: #c1c1c1; margin: 285px 0 274px; flex: none; }
.stage-foot { display: flex; height: 17px; }
.bottom { width: 1338px; height: 17px; }
.bottom .thumb { width: 369px; margin: 0 468px 0 477px; }
.corner { width: 17px; background: #dcdcdc; }
.notes { width: 299px; background: #eee; position: relative; overflow: hidden; flex: none; }
.notes-head { height: 37px; border-bottom: 1px solid #ccc; padding-left: 16px; font-size: 13.600px; font-weight: 700; line-height: 36px; }
.notes-title { padding: 8px 0 0 16px; font-size: 14px; line-height: 20px; }
.notes-text { padding: 19px 0 0 16px; font-size: 12px; font-style: italic; line-height: 20px; }
.map { position: absolute; left: 84px; top: 648px; width: 200px; height: 127px; background: #fff; border: 1px solid #ccc; border-radius: 4px; box-shadow: 0 8px 18px rgba(0, 0, 0, .3), 0 4px 60px rgba(0, 0, 0, .16); padding: 13px; }
.map-frame { width: 174px; height: 101px; border: 1px solid #000; padding: 2px 0 0 40px; }
.zoomers { margin-top: 178px; font-size: 14px; color: #eee; }
.zoomers div { height: 36px; display: flex; align-items: center; justify-content: center; }
.rail > .play:last-child { margin-top: auto; margin-bottom: 8px; }

.taskbar { height: 40px; display: flex; flex: none; color: #fff; background: linear-gradient(90deg, #1b1b20 0, #1b1f22 300px, #1b2a26 380px, #1c211f 530px, #33182e 600px, #2e1729 740px, #421f38 790px, #25281e 870px, #1b2417 960px, #322b1c 1130px, #28301f 1280px, #36291c 1400px, #30251c 1490px, #4a2035 1600px, #38203c 1680px, #452048 1790px, #2b1a30 1870px, #1e1a20 1920px); }
.start { width: 48px; display: flex; align-items: center; justify-content: center; }
.find { width: 288px; background: #f2f2f2; border: 1px solid #bbb; display: flex; align-items: center; color: #333; font-size: 14px; padding-left: 11px; }
.find span { flex: 1; margin-left: 11px; }
.app { width: 49.300px; display: flex; align-items: center; justify-content: center; border-bottom: 2px solid transparent; }
.discord { background: #b3602e; border-color: #ff7a00; width: 48px; }
.chrome { background: #614f5c; border-color: #76b9ed; width: 49px; border-left: 1px solid #333; }
.dish { background: linear-gradient(#76b9ed, #76b9ed) 5px 100% / 40px 2px no-repeat; background-origin: border-box; background-clip: border-box; }
.tray { margin-left: auto; display: flex; align-items: center; font-size: 14px; }
.temp { margin: 0 9px 0 7px; letter-spacing: -.2px; }
.sky { margin-right: 22px; }
.meet { margin-left: 11px; }
.wifi { margin-left: 12px; }
.vol { margin-left: 7px; }
.clock { width: 72px; margin-left: 2px; display: flex; flex-direction: column; align-items: center; font-size: 11.200px; line-height: 18px; letter-spacing: -.2px; }
.notif { margin: 6px 11px 0 10px; }
.peek { width: 5px; height: 40px; border-left: 1px solid #777; }
</style>
